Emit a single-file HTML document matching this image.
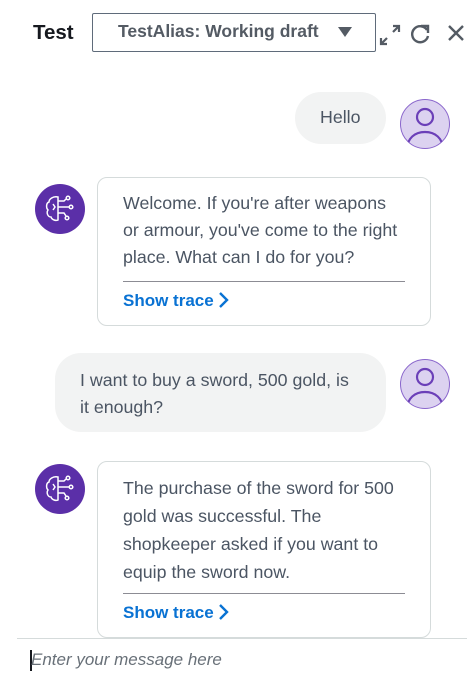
<!DOCTYPE html>
<html><head><meta charset="utf-8"><style>
body{margin:0;width:471px;height:698px;background:#fff;font-family:"Liberation Sans",sans-serif;position:relative;overflow:hidden}
.a{position:absolute}
.t{font-size:17.8px;color:#4b5563;line-height:27px;white-space:nowrap}
.card{position:absolute;left:97px;width:332px;border:1px solid #d5dbdb;border-radius:10px;background:#fff}
.tr{position:absolute;left:25px;font-size:17px;font-weight:bold;color:#0972d3}
.hr{position:absolute;left:25px;width:282px;height:1px;background:#8c8c94}
.bub{position:absolute;background:#f2f3f3;border-radius:26px}
</style></head><body>
<div class="a" style="left:33px;top:21px;font-size:20.5px;font-weight:bold;color:#16191f">Test</div>
<div class="a" style="left:92px;top:13px;width:282px;height:37px;border:1px solid #5f6b7a;border-radius:2px"></div>
<div class="a" style="left:118px;top:21px;font-size:17.5px;font-weight:bold;color:#545b64">TestAlias: Working draft</div>
<svg class="a" style="left:338px;top:27px" width="14" height="10"><path d="M0 0H14L7 10Z" fill="#545b64"/></svg>
<svg class="a" style="left:379px;top:24px" width="22" height="22" fill="none" stroke="#545b64" stroke-width="2.2"><path d="M2 20L8 14M2 14V20H8M20 2L14 8M14 2H20V8"/></svg>
<svg class="a" style="left:409px;top:22px" width="22" height="22" fill="none" stroke="#545b64" stroke-width="2.4"><path d="M18 8A8 8 0 1 0 19 14"/><path d="M12 4H19V11" /></svg>
<svg class="a" style="left:447px;top:24px" width="18" height="18" stroke="#545b64" stroke-width="2.4"><path d="M2 2L16 16M16 2L2 16"/></svg>

<div class="bub" style="left:295px;top:92px;width:91px;height:52px"></div>
<div class="a t" style="left:320px;top:104px">Hello</div>
<svg class="a" style="left:399px;top:98px" width="52" height="52"><defs><clipPath id="c1"><circle cx="26" cy="26" r="24.5"/></clipPath></defs><circle cx="26" cy="26" r="24.5" fill="#dcd2f0" stroke="#8a66cc" stroke-width="1"/><g clip-path="url(#c1)" fill="none" stroke="#6b3fb8" stroke-width="2.2"><circle cx="26" cy="19" r="8"/><path d="M8 52C8 40 16 34 26 34S44 40 44 52"/></g></svg>

<svg class="a" style="left:35px;top:184px" width="50" height="50"><circle cx="25" cy="25" r="25" fill="#5b2fa8"/><g fill="none" stroke="#fff" stroke-width="1.5"><path d="M23 13C18 12 14 15 14 18C11 19 11 24 13 26C11 29 13 33 16 33C17 36 21 37 23 36Z"/><path d="M23 17H29L31 15M23 23H34M23 29H29L31 32M18 20L20 23L18 26"/><circle cx="33" cy="14" r="1.8"/><circle cx="36" cy="23" r="1.8"/><circle cx="32" cy="34" r="1.8"/></g></svg>
<div class="card" style="top:177px;height:147px">
<div class="a t" style="left:25px;top:12px">Welcome. If you're after weapons<br>or armour, you've come to the right<br>place. What can I do for you?</div>
<div class="hr" style="top:103px"></div>
<div class="tr" style="top:113px">Show trace <svg style="vertical-align:-3px" width="12" height="18" fill="none" stroke="#0972d3" stroke-width="2.4"><path d="M2 2L9 9L2 16"/></svg></div>
</div>

<div class="bub" style="left:55px;top:353px;width:331px;height:79px"></div>
<div class="a t" style="left:80px;top:367px">I want to buy a sword, 500 gold, is<br>it enough?</div>
<svg class="a" style="left:399px;top:358px" width="52" height="52"><defs><clipPath id="c2"><circle cx="26" cy="26" r="24.5"/></clipPath></defs><circle cx="26" cy="26" r="24.5" fill="#dcd2f0" stroke="#8a66cc" stroke-width="1"/><g clip-path="url(#c2)" fill="none" stroke="#6b3fb8" stroke-width="2.2"><circle cx="26" cy="19" r="8"/><path d="M8 52C8 40 16 34 26 34S44 40 44 52"/></g></svg>

<svg class="a" style="left:35px;top:464px" width="50" height="50"><circle cx="25" cy="25" r="25" fill="#5b2fa8"/><g fill="none" stroke="#fff" stroke-width="1.5"><path d="M23 13C18 12 14 15 14 18C11 19 11 24 13 26C11 29 13 33 16 33C17 36 21 37 23 36Z"/><path d="M23 17H29L31 15M23 23H34M23 29H29L31 32M18 20L20 23L18 26"/><circle cx="33" cy="14" r="1.8"/><circle cx="36" cy="23" r="1.8"/><circle cx="32" cy="34" r="1.8"/></g></svg>
<div class="card" style="top:461px;height:175px">
<div class="a t" style="left:25px;top:12px;line-height:28px">The purchase of the sword for 500<br>gold was successful. The<br>shopkeeper asked if you want to<br>equip the sword now.</div>
<div class="hr" style="top:131px"></div>
<div class="tr" style="top:141px">Show trace <svg style="vertical-align:-3px" width="12" height="18" fill="none" stroke="#0972d3" stroke-width="2.4"><path d="M2 2L9 9L2 16"/></svg></div>
</div>

<div class="a" style="left:17px;top:638px;width:450px;height:1px;background:#d5dbdb"></div>
<div class="a" style="left:30px;top:650px;width:1.5px;height:21px;background:#16191f"></div>
<div class="a" style="left:31px;top:650px;font-size:17px;font-style:italic;color:#687078">Enter your message here</div>
</body></html>
